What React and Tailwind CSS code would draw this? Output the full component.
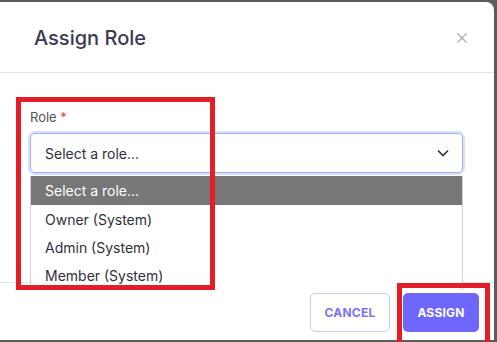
import React from "react";

export default function App() {
  const font = { fontFamily: "Inter, 'Noto Sans', sans-serif" };
  return (
    <div className="w-[497px] h-[342px] bg-[#5c5c5c] overflow-hidden" style={font}>
      <div className="relative mt-[2px] w-[494px] h-[338px] bg-white rounded-tr-[8px] flex flex-col">
        {/* header */}
        <div className="h-[71px] border-b border-[#e3e3e6] flex items-center justify-between pl-[34px] pr-[27px]">
          <h2 className="text-[20px] font-medium text-[#3b3b52] leading-none mt-[1px]">Assign Role</h2>
          <svg width="10" height="10" viewBox="0 0 10 10" className="mt-[1px]">
            <path d="M0.5 0.5L9.5 9.5M9.5 0.5L0.5 9.5" stroke="#a9a9ae" strokeWidth="1.1" />
          </svg>
        </div>
        {/* body */}
        <div className="h-[209px] px-[30px] pt-[34px]">
          <label className="block text-[13px] leading-[20px] text-[#555] mb-[6px]">
            Role <span className="text-[#e5484d]">*</span>
          </label>
          <div className="h-[40px] w-[433px] rounded-[5px] border border-[#9fb0f7] shadow-[0_0_0_2px_#d9e0fd] flex items-center justify-between pl-[14px] pr-[13px]">
            <span className="text-[14px] text-[#2f2f3a]">Select a role...</span>
            <svg width="12" height="8" viewBox="0 0 12 8">
              <path d="M1 1.5L6 6.5L11 1.5" stroke="#333" strokeWidth="1.6" fill="none" />
            </svg>
          </div>
        </div>
        {/* footer */}
        <div className="flex-1 border-t border-[#e3e3e6] flex justify-end items-start pt-[10px] pr-[15px] gap-[13px]">
          <button className="w-[80px] h-[39px] rounded-[5px] border border-[#cdc9fb] text-[#7b73f5] text-[12px] font-bold tracking-[0.2px]">
            CANCEL
          </button>
          <button className="w-[76px] h-[39px] rounded-[5px] bg-[#6f66fb] text-white text-[12px] font-bold tracking-[0.2px]">
            ASSIGN
          </button>
        </div>

        {/* open dropdown list */}
        <div className="absolute left-[30px] top-[174px] w-[433px] h-[114px] bg-white border-x border-[#cfcfcf] overflow-hidden">
          <div className="h-[29px] bg-[#777777] text-white text-[14px] flex items-center pl-[14px]">Select a role...</div>
          <div className="h-[28px] text-[14px] text-[#2f2f3a] flex items-center pl-[14px]">Owner (System)</div>
          <div className="h-[28px] text-[14px] text-[#2f2f3a] flex items-center pl-[14px]">Admin (System)</div>
          <div className="h-[28px] text-[14px] text-[#2f2f3a] flex items-center pl-[14px]">Member (System)</div>
        </div>

        {/* annotation boxes */}
        <div className="absolute left-[16px] top-[95px] w-[199px] h-[193px] border-[5px] border-[#e41e26]" />
        <div className="absolute left-[397px] top-[281px] w-[93px] h-[70px] border-[5px] border-[#e41e26]" />
      </div>
      <div className="h-[2px]" />
    </div>
  );
}
